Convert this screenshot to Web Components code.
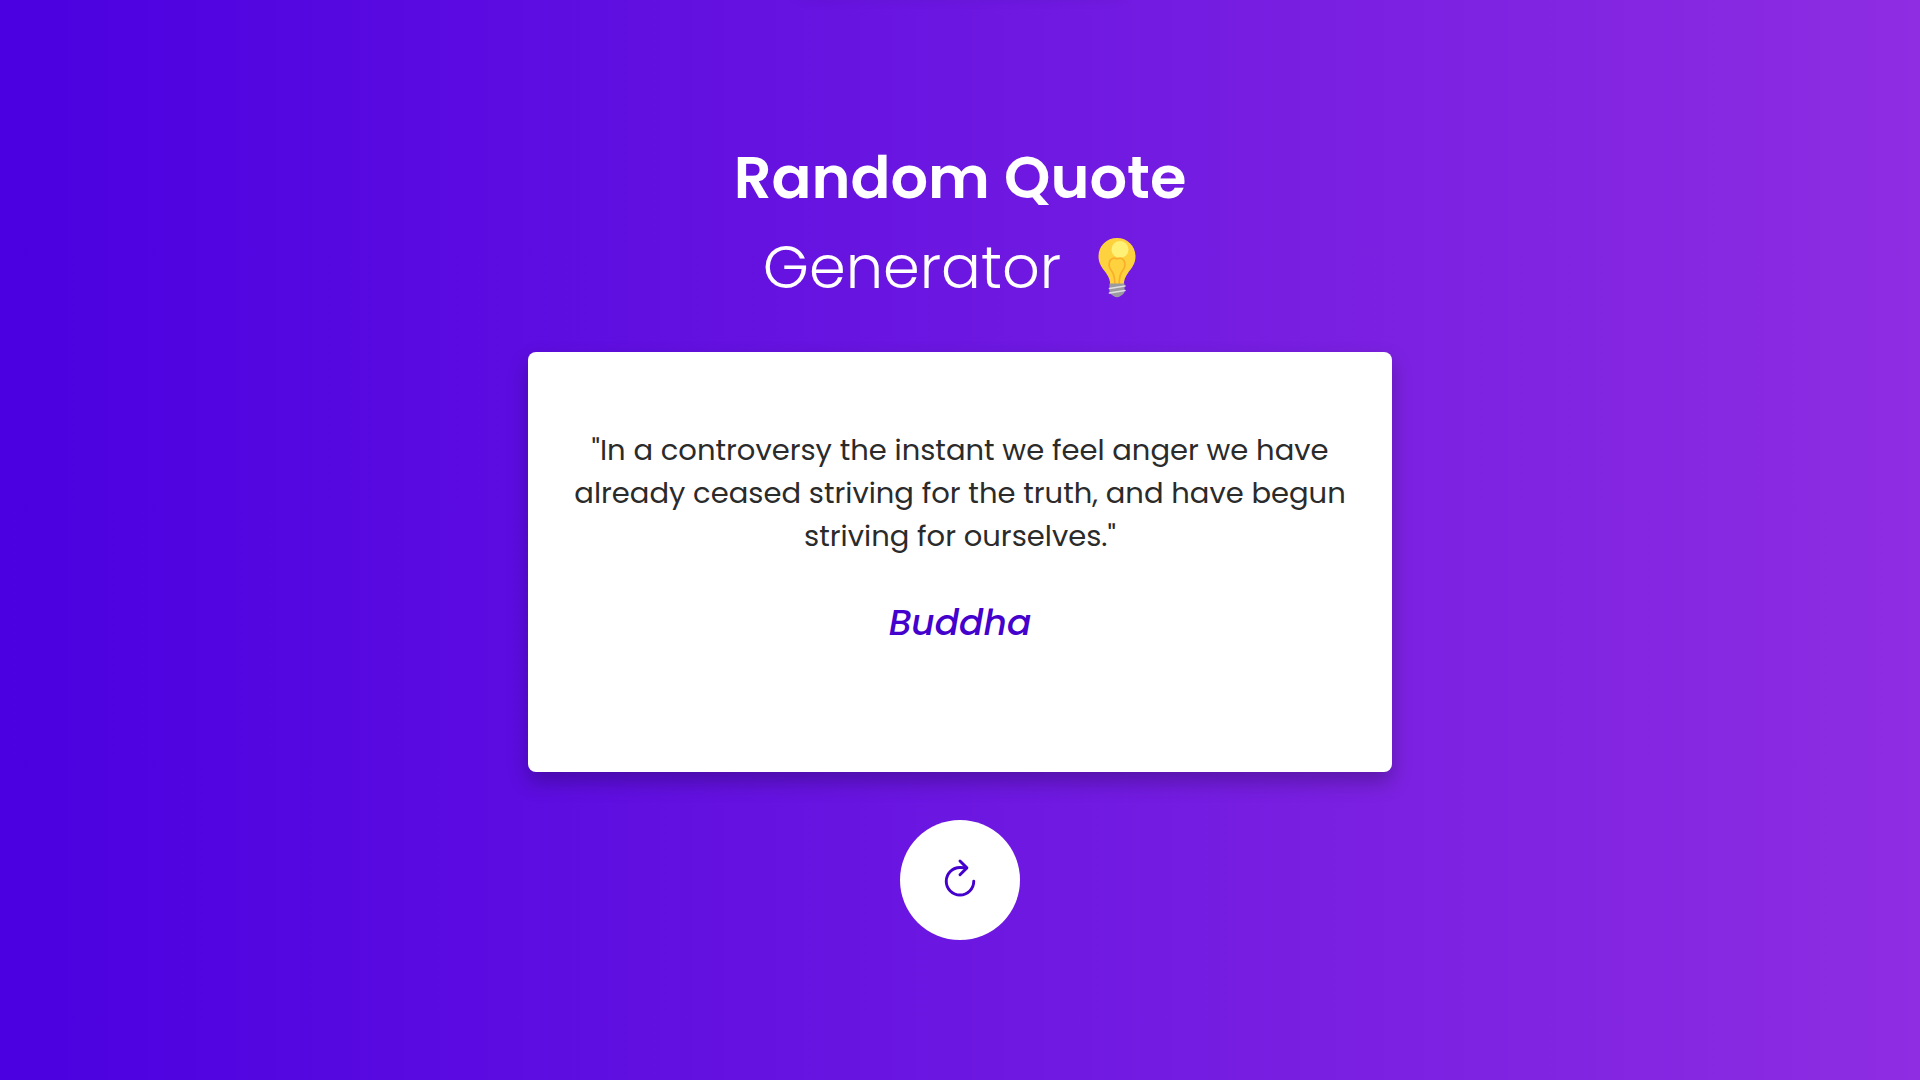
<!DOCTYPE html>
<html lang="en">
<head>
<meta charset="utf-8">
<title>Random Quote Generator</title>
<style>
  :root { --brand: #4a00e0; --brand-end: #8e2de2; --accent: #4400cc; --ink: #2b2b2b; }
  html, body { height: 100%; margin: 0; }
  body {
    font-family: Poppins, Inter, "Open Sans", sans-serif;
    color: var(--ink);
  }
</style>
</head>
<body>
<quote-app>
  <app-title slot="title">Random Quote<span slot="sub">Generator</span></app-title>
  <quote-card>"In a controversy the instant we feel anger we have already ceased striving for the truth, and have begun striving for ourselves."<span slot="author">Buddha</span></quote-card>
  <refresh-button></refresh-button>
</quote-app>
<script>
const define = (name, html) => customElements.define(name, class extends HTMLElement {
  constructor() {
    super();
    this.attachShadow({ mode: "open" }).innerHTML = html;
  }
});

define("quote-app", `
  <style>
    :host { display: flex; position: relative; min-height: 100vh; overflow: hidden; background: linear-gradient(to right, var(--brand), var(--brand-end)); }
    main { display: flex; flex: 1; flex-direction: column; align-items: center; padding-top: 133px; box-sizing: border-box; }
    /* notification bar parked above the window */
    .toast { position: absolute; bottom: 100%; left: 50%; width: 320px; height: 60px; margin: 0 0 20px -160px; box-shadow: 0 10px 20px rgba(0, 0, 0, .2); }
    ::slotted(quote-card) { width: 45%; margin-top: 39px; }
    ::slotted(refresh-button) { margin-top: 48px; }
  </style>
  <div class="toast"></div>
  <main><slot name="title"></slot><slot></slot></main>`);

define("app-title", `
  <style>
    :host { display: block; color: #fff; text-align: center; }
    h1 { margin: 0; font-size: 59px; line-height: 90px; font-weight: 600; }
    .sub { display: flex; justify-content: center; align-items: center; gap: 16px; font-weight: 300; }
    svg { width: 80px; height: 60px; }
  </style>
  <h1>
    <slot></slot>
    <span class="sub"><slot name="sub"></slot>
      <svg viewBox="0 0 72 60" role="img" aria-label="light bulb">
        <path d="M36 0C25.500 0 17.500 8 17.500 18.500c0 8 4.500 12 7.500 16.500 3 4.500 4 7 4.200 11.500h13.600c.2-4.500 1.200-7 4.200-11.500 3-4.500 7.500-8.500 7.500-16.500C54.500 8 46.500 0 36 0z" fill="#fdd23e"/>
        <circle cx="39" cy="11.500" r="8.500" fill="#fff176"/>
        <path d="M33.800 46c0-7-1-10.500-3.500-13.500-4-5-2-10.500 1-12 2.500-1.200 3.500.5 4.700.5s2.200-1.700 4.700-.5c3 1.500 5 7 1 12-2.500 3-3.500 6.500-3.500 13.500" fill="none" stroke="#faae2b" stroke-width="1.700"/>
        <path d="M28.500 45.500h15v8c0 2-2 3-4 4.500q-3.500 2.500-7 0c-2-1.500-4-2.500-4-4.500z" fill="#9b9b9f"/>
        <path d="M28.500 50.500l15.500-2.500M28.500 55l15.500-2.500" stroke="#dedee4" stroke-width="1.600" stroke-linecap="round"/>
      </svg>
    </span>
  </h1>`);

define("quote-card", `
  <style>
    :host { display: flex; box-sizing: border-box; min-height: 420px; padding: 77px 40px; border-radius: 8px; background: #fff; box-shadow: 0 10px 20px rgba(0, 0, 0, .25); text-align: center; }
    figure { flex: 1; margin: 0; }
    blockquote { margin: 0; font-size: 29px; line-height: 43px; }
    figcaption { margin-top: 38px; font-size: 36px; line-height: 54px; font-weight: 500; font-style: italic; color: var(--accent); }
  </style>
  <figure>
    <blockquote><slot></slot></blockquote>
    <figcaption><slot name="author"></slot></figcaption>
  </figure>`);

define("refresh-button", `
  <style>
    :host { display: block; }
    button { display: flex; align-items: center; justify-content: center; width: 120px; height: 120px; padding: 0 0 4px; border: 0; border-radius: 50%; background: #fff; color: var(--accent); cursor: pointer; }
    svg { width: 44px; height: 44px; }
  </style>
  <button type="button" aria-label="New quote">
    <svg viewBox="0 0 512 512" fill="none" stroke="currentColor" stroke-width="34" stroke-linecap="round">
      <path d="M320 146s24.360-12-64-12a160 160 0 1 0 160 160"/>
      <path d="M256 58l80 80-80 80" stroke-linejoin="round"/>
    </svg>
  </button>`);
</script>
</body>
</html>
